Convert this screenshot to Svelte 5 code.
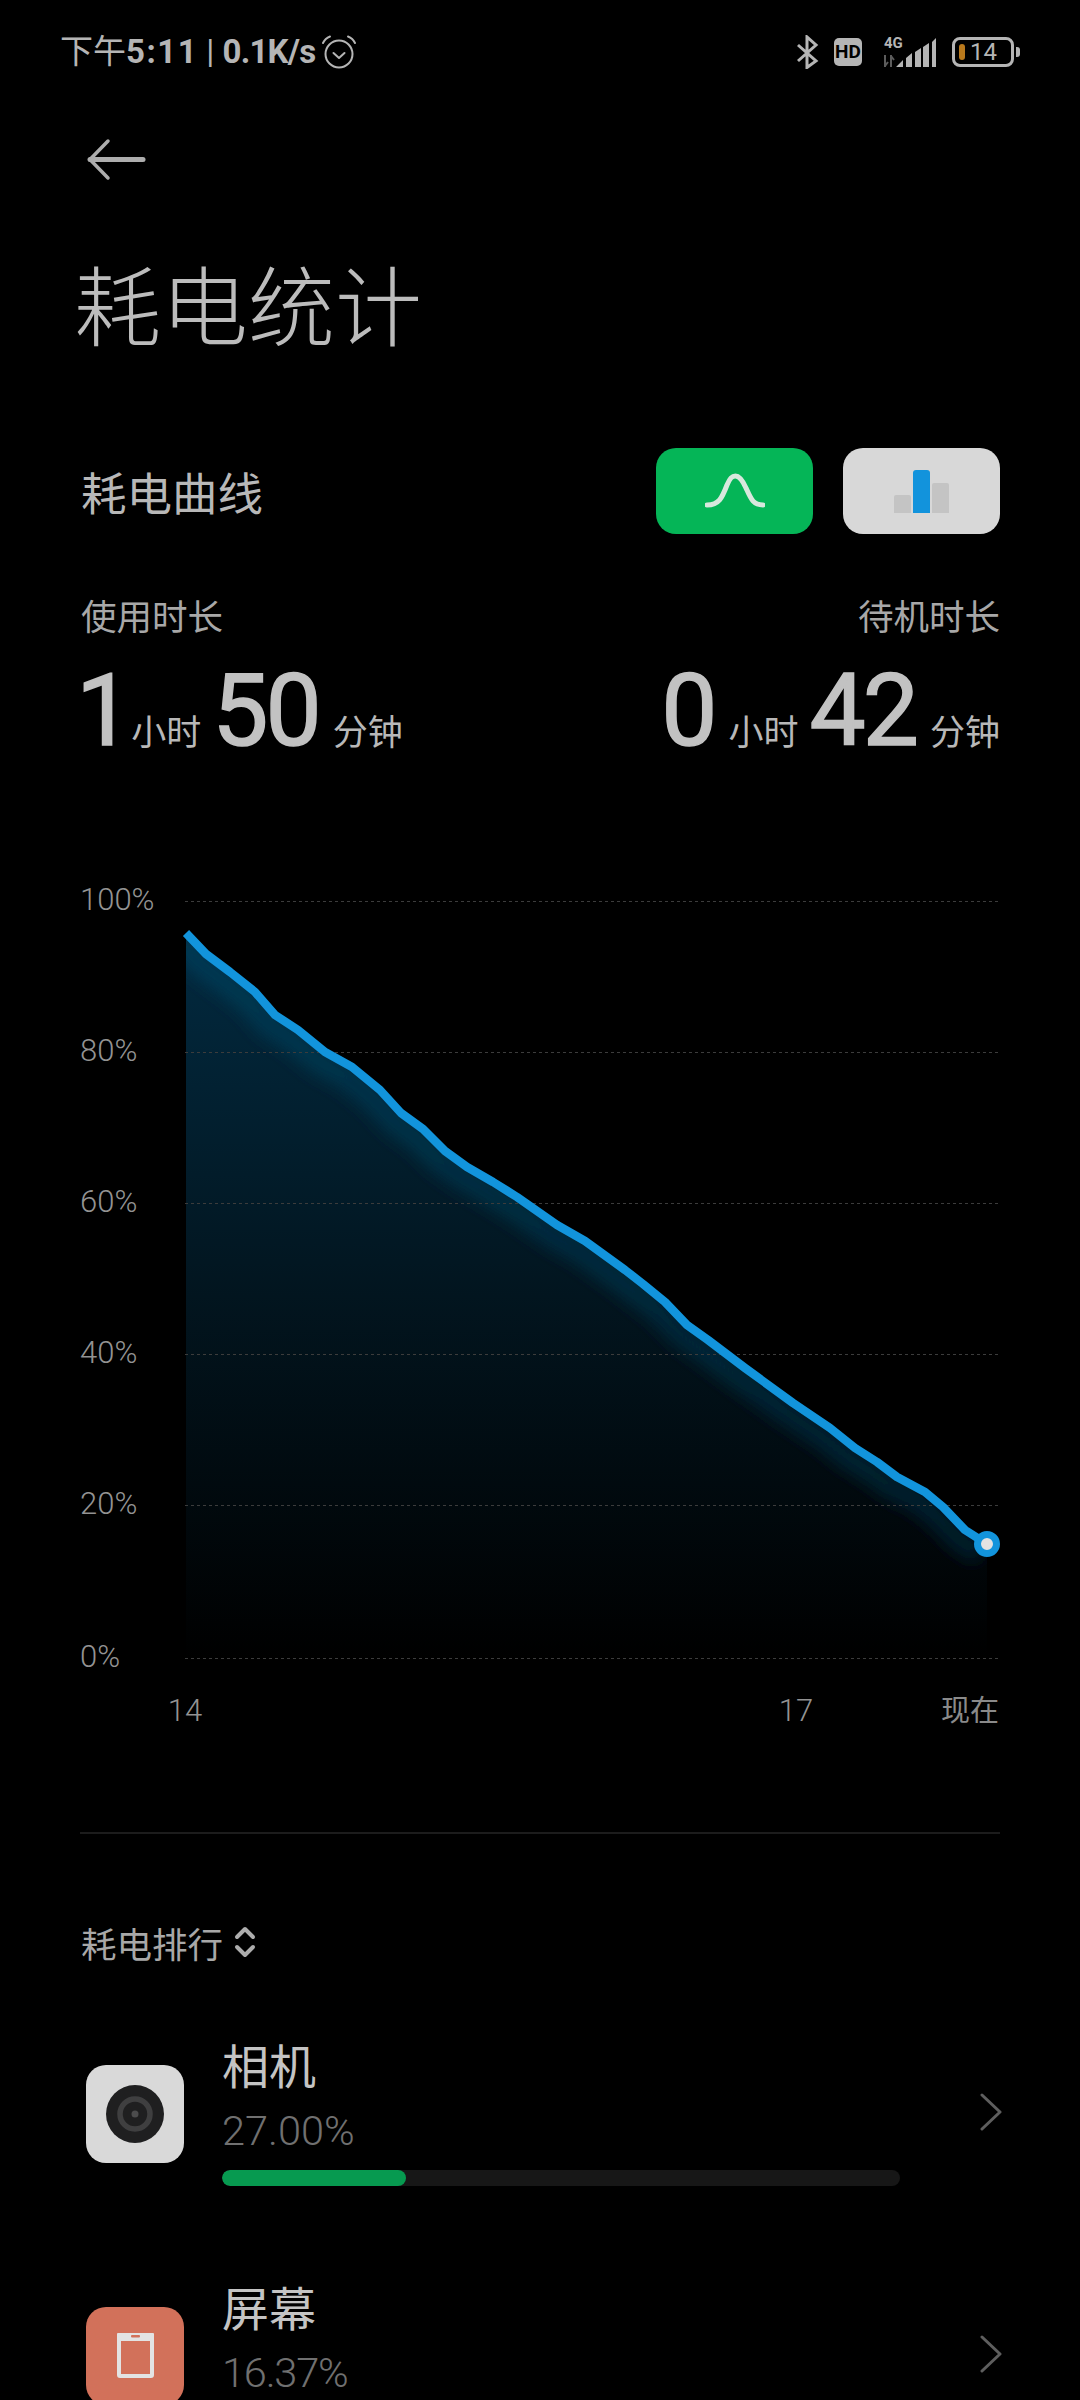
<script>
  const line = [[186,933],[206,954],[230,972],[255,992],[275,1015],[298,1030],[325,1052],[352,1067],[380,1090],[401,1113],[423,1129],[445,1151],[467,1167],[493,1182],[517,1197],[557,1225],[585,1241],[625,1270],[643,1284],[665,1302],[687,1325],[708,1340],[745,1368],[793,1403],[830,1428],[855,1448],[877,1462],[897,1477],[925,1492],[943,1507],[965,1530],[987,1544]];
  const pts = line.map((p) => p.join(',')).join(' ');
  const area = `186,933 ${pts} 987,1658 186,1658`;
  const grid = [
    { label: '100%', y: 901 },
    { label: '80%', y: 1052 },
    { label: '60%', y: 1203 },
    { label: '40%', y: 1354 },
    { label: '20%', y: 1505 },
    { label: '0%', y: 1658 }
  ];
</script>

<div class="page">
  <header class="status">
    <div class="status-left">
      <span class="clock"><span class="cjk">下午</span><span class="time">5:11</span> <span class="thin">|</span> <span class="speed">0.1K/s</span></span>
      <svg class="alarm" viewBox="0 0 34 34" width="34" height="34" fill="none" stroke="#b5b5b5">
        <circle cx="17" cy="19" r="13.500" stroke-width="2"/>
        <path d="M11.500 18l5.500 5 5.500-5" stroke-width="2" stroke-linecap="round" stroke-linejoin="round"/>
        <path d="M1 8C2.500 4.800 4.500 2.800 8 1.500M33 8C31.500 4.800 29.500 2.800 26 1.500" stroke-width="2" stroke-linecap="round"/>
      </svg>
    </div>
    <div class="status-right">
      <svg class="bt" viewBox="0 0 22 34" width="22" height="34" fill="none" stroke="#b5b5b5" stroke-width="3">
        <path d="M1 10l18 16-9 6.500V2l9 8L1 26"/>
      </svg>
      <span class="hd">HD</span>
      <svg class="signal" viewBox="0 0 60 34" width="60" height="34">
        <text x="4" y="13" class="four-g">4G</text>
        <path d="M5 20v12M8 27l-3 4M11 32V20M14 25l-3-4" stroke="#5c5c5c" stroke-width="2" fill="none"/>
        <path d="M16 32l7-7v7zM26 32V23l6-5v14zM35 32V17l6-4v19zM43 32V12l6-4v24zM52 32V7l4-4v29z" fill="#b5b5b5"/>
      </svg>
      <div class="battery">
        <i class="level"></i>
        <span>14</span>
      </div>
      <i class="cap"></i>
    </div>
  </header>

  <svg class="back" viewBox="0 0 60 44" width="60" height="44" fill="none" stroke="#adadad" stroke-linecap="round" stroke-linejoin="round">
    <path d="M3 21.500H56" stroke-width="5"/>
    <path d="M21 3L3 21.500 21 40" stroke-width="3.500"/>
  </svg>

  <h1>耗电统计</h1>

  <section class="curve-head">
    <h2>耗电曲线</h2>
    <div class="toggles">
      <button class="toggle on" aria-label="曲线">
        <svg viewBox="0 0 60 36" width="60" height="36" fill="none" stroke="#d8e8dd" stroke-width="5" stroke-linecap="round">
          <path d="M2 32C14 32 17 25 22 12 25 5 27 3 30.500 3S37 6 41 15C46 26 48 32 58 32"/>
        </svg>
      </button>
      <button class="toggle off" aria-label="柱状">
        <span class="bar side" style="height:18px"></span>
        <span class="bar mid" style="height:43px"></span>
        <span class="bar side" style="height:30px"></span>
      </button>
    </div>
  </section>

  <section class="durations">
    <div class="dur">
      <div class="dur-label">使用时长</div>
      <div class="dur-value"><b class="one">1</b><span>小时</span><b>50</b><span>分钟</span></div>
    </div>
    <div class="dur right">
      <div class="dur-label">待机时长</div>
      <div class="dur-value"><b>0</b><span>小时</span><b>42</b><span>分钟</span></div>
    </div>
  </section>

  <section class="chart">
    <svg viewBox="0 860 1080 972" width="1080" height="972" class="chart-svg">
      <defs>
        <linearGradient id="fade" x1="0" y1="933" x2="0" y2="1658" gradientUnits="userSpaceOnUse">
          <stop offset="0" stop-color="#022a40"/>
          <stop offset="0.5" stop-color="#02151f"/>
          <stop offset="1" stop-color="#000000"/>
        </linearGradient>
        <linearGradient id="glow" x1="0" y1="933" x2="0" y2="1600" gradientUnits="userSpaceOnUse">
          <stop offset="0" stop-color="#053a54"/>
          <stop offset="1" stop-color="#021a26"/>
        </linearGradient>
        <clipPath id="under"><polygon points={area}/></clipPath>
        <filter id="soft" x="-10%" y="-10%" width="120%" height="120%"><feGaussianBlur stdDeviation="8"/></filter>
      </defs>
      <polygon points={area} fill="url(#fade)"/>
      <g clip-path="url(#under)">
        <polyline points={pts} fill="none" stroke="url(#glow)" stroke-width="24" filter="url(#soft)" transform="translate(-6 10)"/>
      </g>
      {#each grid as g}
        <line x1="185" x2="998" y1={g.y + 0.5} y2={g.y + 0.5} class="grid"/>
        <text x="80" y={g.y + 9} class="axis">{g.label}</text>
      {/each}
      <polyline points={pts} fill="none" stroke="#1294dc" stroke-width="8.500" stroke-linejoin="round"/>
      <circle cx="987" cy="1544" r="9.500" fill="#e2e2e2" stroke="#1294dc" stroke-width="7"/>
      <text x="185" y="1721" class="axis mid-a">14</text>
      <text x="796" y="1721" class="axis mid-a">17</text>
      <text x="999" y="1721" class="axis end-a">现在</text>
    </svg>
  </section>

  <hr />

  <div class="rank-head">
    <span>耗电排行</span>
    <svg viewBox="0 0 22 32" width="22" height="32" fill="none" stroke="#adadad" stroke-width="4" stroke-linecap="round" stroke-linejoin="round">
      <path d="M3 11l8-8 8 8M3 21l8 8 8-8"/>
    </svg>
  </div>

  <div class="row first">
    <div class="app cam">
      <svg viewBox="0 0 98 98" width="98" height="98">
        <circle cx="49" cy="49" r="29" fill="#1f1f20"/>
        <circle cx="49" cy="49" r="15" fill="none" stroke="#3f3f40" stroke-width="5.500"/>
        <circle cx="49" cy="49" r="3.500" fill="#4c4c4d"/>
      </svg>
    </div>
    <div class="info">
      <div class="name">相机</div>
      <div class="pct">27.00%</div>
      <div class="track"><div class="fill" style="width:184px"></div></div>
    </div>
    <svg class="chev" viewBox="0 0 22 38" width="22" height="38" fill="none" stroke="#5e5e5e" stroke-width="3" stroke-linecap="round" stroke-linejoin="round">
      <path d="M2 2l18 17L2 36"/>
    </svg>
  </div>

  <div class="row">
    <div class="app screen">
      <svg viewBox="0 0 98 98" width="98" height="98">
        <rect x="33" y="28" width="33" height="41" fill="none" stroke="#e3e3e3" stroke-width="4" rx="1"/>
        <rect x="31" y="26" width="37" height="8" rx="1" fill="#e3e3e3"/>
        <rect x="45" y="28" width="9" height="2.500" rx="1" fill="#d2715a"/>
      </svg>
    </div>
    <div class="info">
      <div class="name">屏幕</div>
      <div class="pct tight">16.37%</div>
    </div>
    <svg class="chev" viewBox="0 0 22 38" width="22" height="38" fill="none" stroke="#5e5e5e" stroke-width="3" stroke-linecap="round" stroke-linejoin="round">
      <path d="M2 2l18 17L2 36"/>
    </svg>
  </div>
</div>

<style>
  :global(body) { margin: 0; background: #000; }
  .page {
    width: 1080px;
    height: 2400px;
    overflow: hidden;
    background: #000;
    color: #bdbdbd;
    font-family: "Noto Sans CJK SC", "Noto Sans", sans-serif;
    position: relative;
  }
  .status {
    height: 104px;
    box-sizing: border-box;
    padding: 35px 60px 0 60px;
    display: flex;
    justify-content: space-between;
    align-items: flex-start;
  }
  .status-left { display: flex; align-items: center; gap: 7px; height: 34px; }
  .clock {
    font-family: Roboto, "Noto Sans CJK SC", sans-serif;
    font-size: 33px;
    font-weight: 700;
    color: #b5b5b5;
    line-height: 34px;
    white-space: nowrap;
  }
  .cjk { font-weight: 400; }
  .thin { font-weight: 400; }
  .time { letter-spacing: 1.500px; }
  .speed { letter-spacing: -0.800px; }
  .status-right { display: flex; align-items: center; height: 34px; }
  .bt { margin-right: 15px; }
  .hd {
    width: 28px; height: 28px; border-radius: 5px; background: #b5b5b5; color: #000;
    font: 700 19px/28px Roboto, sans-serif; text-align: center; margin-right: 18px;
  }
  .signal { margin-right: 12px; }
  .four-g { font: 700 15px Roboto, sans-serif; fill: #b5b5b5; }
  .battery {
    width: 62px; height: 30px; box-sizing: border-box;
    border: 3.500px solid #b5b5b5; border-radius: 8px;
    display: flex; align-items: center; gap: 5px; padding-left: 4px;
    font: 400 24px/24px Roboto, sans-serif; color: #b5b5b5;
  }
  .level { width: 6px; height: 16px; border-radius: 3px; background: #b9791c; }
  .cap { width: 4px; height: 10px; border-radius: 0 3px 3px 0; background: #b5b5b5; margin-left: 2px; }

  .back { display: block; margin: 34px 0 0 87px; }

  h1 {
    margin: 0;
    padding: 70px 0 0 74px;
    font-size: 87px;
    font-weight: 300;
    line-height: 100px;
    color: #bcbcbc;
  }

  .curve-head {
    margin-top: 96px;
    padding: 0 80px 0 81px;
    height: 86px;
    display: flex;
    justify-content: space-between;
    align-items: center;
  }
  h2 { margin: 0; font-size: 45.500px; font-weight: 400; color: #b8b8b8; }
  .toggles { display: flex; gap: 30px; }
  .toggle {
    width: 157px; height: 86px; border: 0; padding: 0; border-radius: 20px;
    display: flex; align-items: center; justify-content: center;
  }
  .on { background: #05b557; }
  .off { background: #d8d8d8; align-items: flex-end; gap: 2px; padding-bottom: 21px; box-sizing: border-box; }
  .bar { width: 17px; }
  .side { background: #c4c4c4; border-radius: 2px 2px 0 0; }
  .mid { background: #1293dc; border-radius: 3px 3px 0 0; }

  .durations {
    margin-top: 58px;
    padding: 0 80px 0 81px;
    display: flex;
    justify-content: space-between;
  }
  .dur-label { font-size: 35.500px; line-height: 46px; color: #a8a8a8; }
  .right .dur-label { text-align: right; }
  .dur-value { display: flex; align-items: baseline; margin-top: 28px; height: 90px; line-height: 90px; }
  .dur-value b {
    font-family: Roboto, sans-serif;
    font-weight: 400;
    font-size: 100px;
    color: #c2c2c2;
    -webkit-text-stroke: 1.500px #c2c2c2;
    letter-spacing: -3px;
  }
  .dur-value b.one { margin: 0 -12px 0 -5px; }
  .dur-value span { font-size: 35px; color: #b8b8b8; margin: 0 11px 0 14px; }
  .dur-value span:last-child { margin-right: 0; }

  .chart { margin-top: 104px; }
  .chart-svg { display: block; }
  .grid { stroke: #3c3c3c; stroke-width: 1; stroke-dasharray: 3 3; }
  .axis { font-family: Roboto, "Noto Sans CJK SC", sans-serif; font-size: 31px; font-weight: 300; fill: #939393; }
  .mid-a { text-anchor: middle; }
  .end-a { text-anchor: end; font-family: "Noto Sans CJK SC", sans-serif; font-size: 29px; font-weight: 400; fill: #8a8a8a; }

  hr { border: 0; height: 2px; background: #1c1c1c; margin: 0 80px; }

  .rank-head {
    margin-top: 83px;
    padding-left: 81px;
    display: flex;
    align-items: center;
    gap: 11px;
    height: 50px;
    font-size: 35.500px;
    color: #a8a8a8;
  }

  .row {
    position: relative;
    padding-left: 86px;
    display: flex;
    align-items: flex-start;
    height: 242px;
  }
  .row.first { margin-top: 69px; }
  .app { width: 98px; height: 98px; border-radius: 20px; flex: none; margin-top: 29px; }
  .cam { background: #d9d9d9; }
  .screen { background: #d2715a; }
  .info { margin: -2px 0 0 38px; width: 678px; }
  .name { font-size: 47px; line-height: 60px; color: #c4c4c4; }
  .pct { font-family: Roboto, sans-serif; font-weight: 300; font-size: 41.500px; line-height: 48px; margin-top: 13px; color: #707070; }
  .tight { letter-spacing: -1.200px; }
  .track { height: 16px; border-radius: 8px; background: #171717; margin-top: 15px; overflow: hidden; }
  .fill { height: 100%; border-radius: 8px; background: #079a50; }
  .chev { position: absolute; left: 980px; top: 57px; }
</style>
